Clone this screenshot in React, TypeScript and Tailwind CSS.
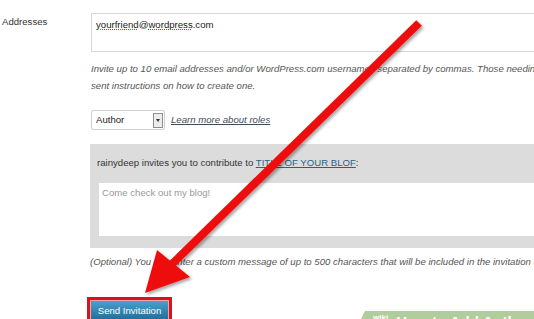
export default function App() {
  return (
    <div className="relative w-[534px] h-[319px] overflow-hidden bg-white font-['Liberation_Sans',Arial,sans-serif] text-[9.6px] leading-[12px] text-[#333]">
      <div className="flex">
        {/* label column */}
        <div className="w-[90px] shrink-0 pl-[2px] pt-[16px] text-[#333]">Addresses</div>

        {/* form column */}
        <div className="flex-1 min-w-0 flex flex-col">
          <div className="mt-[13px] ml-[1px] h-[39px] border border-r-0 border-[#d6d6d6] pl-[4px] pt-[5px] text-[#222] whitespace-nowrap">
            <span className="underline decoration-dotted decoration-[#c33]">yourfriend</span>@<span className="underline decoration-dotted decoration-[#c33]">wordpress</span>.com
          </div>

          <p className="mt-[8px] ml-[1px] italic leading-[17px] text-[#555] whitespace-nowrap">
            Invite up to 10 email addresses and/or WordPress.com usernames separated by commas. Those needing a username will be
            <br />
            sent instructions on how to create one.
          </p>

          <div className="mt-[16px] ml-[1px] flex items-center gap-[6px]">
            <div className="w-[74px] h-[20px] border border-[#cfcfcf] rounded-[2px] flex items-center justify-between pl-[4px] pr-[1px] text-[#222]">
              <span>Author</span>
              <span className="w-[10px] h-[15px] bg-[#ececec] border border-[#8e8e8e] flex items-center justify-center">
                <span className="w-0 h-0 border-l-[2.5px] border-r-[2.5px] border-t-[3px] border-l-transparent border-r-transparent border-t-[#333]" />
              </span>
            </div>
            <a className="italic underline text-[#3d4b5a] whitespace-nowrap">Learn more about roles</a>
          </div>

          <div className="mt-[14px] h-[104px] bg-[#dcdcdc] pt-[13px] flex flex-col">
            <div className="pl-[7px] whitespace-nowrap text-[#333]">
              rainydeep invites you to contribute to{" "}
              <a className="underline text-[#2f5f7d]">TITLE OF YOUR BLOF</a>:
            </div>
            <div className="mt-[14px] ml-[9px] h-[53px] bg-white pl-[3px] pt-[4px] text-[#999]">Come check out my blog!</div>
          </div>

          <p className="mt-[8px] italic text-[#555] whitespace-nowrap">
            (Optional) You can enter a custom message of up to 500 characters that will be included in the invitation to the user(s).
          </p>

          <div className="mt-[29px] -ml-[3px] w-[85px] border-[3px] border-[#d7141c] p-[1px] bg-[#e9a4a6]">
            <button className="w-full h-[20px] bg-gradient-to-b from-[#4aa0cc] to-[#1d6a98] text-white text-[9.6px] leading-[20px] text-center">
              Send Invitation
            </button>
          </div>
        </div>
      </div>

      {/* watermark banner */}
      <div className="absolute left-[355px] top-[311px] w-[200px] h-[20px] bg-[#b2cd9c] [clip-path:polygon(10px_0,100%_0,100%_100%,0_100%)] flex items-start pl-[18px] pt-[2px] gap-[8px] text-white font-bold whitespace-nowrap">
        <span className="text-[8px] leading-[10px]">wiki</span>
        <span className="text-[15px] leading-[18px]">How to Add Authors</span>
      </div>

      {/* red arrow overlay */}
      <svg className="absolute inset-0 pointer-events-none" width="534" height="319" viewBox="0 0 534 319">
        <defs>
          <filter id="sh" x="-20%" y="-20%" width="140%" height="140%">
            <feDropShadow dx="2" dy="2" stdDeviation="1.5" floodColor="#000" floodOpacity="0.35" />
          </filter>
        </defs>
        <g filter="url(#sh)">
          <line x1="419" y1="23" x2="170" y2="266" stroke="#ee0d0d" strokeWidth="8" />
          <polygon points="145,293 157,250 190,277" fill="#ee0d0d" />
        </g>
      </svg>
    </div>
  );
}
